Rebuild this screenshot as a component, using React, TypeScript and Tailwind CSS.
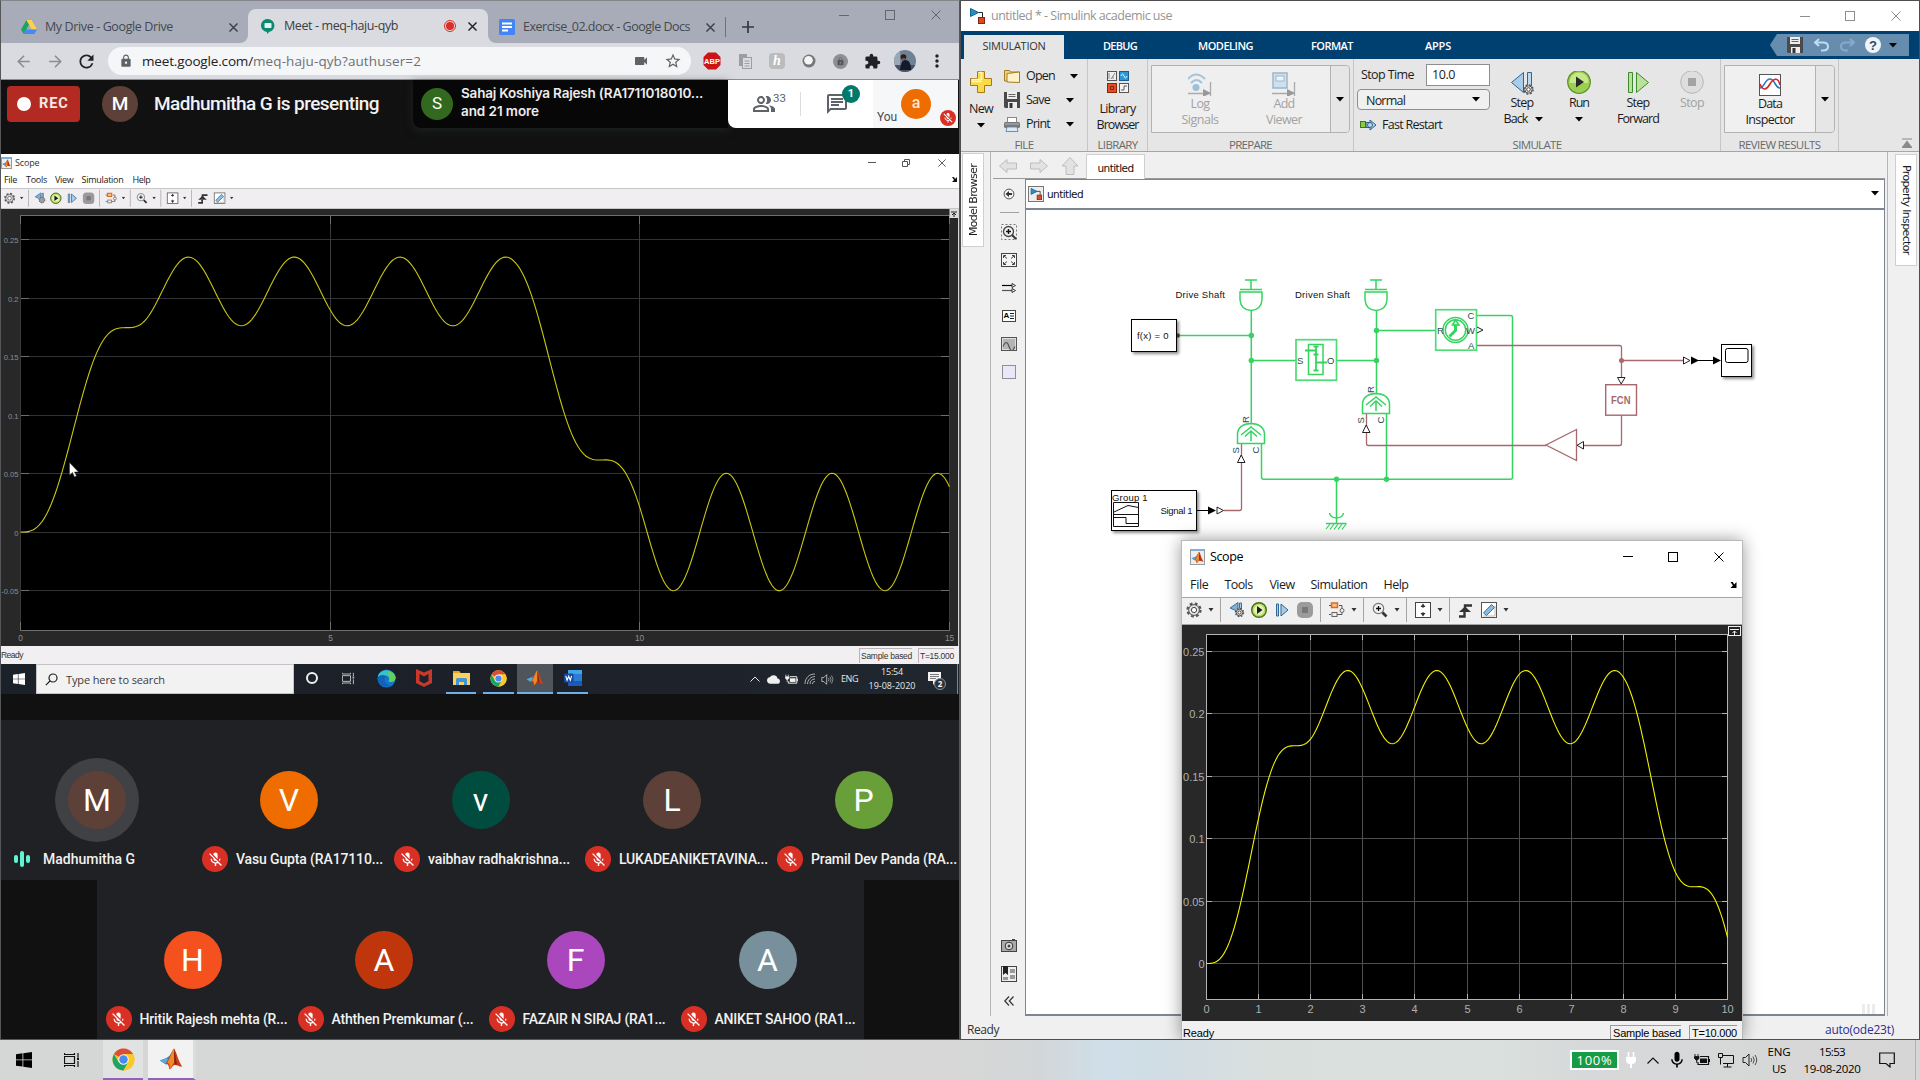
import React, { useLayoutEffect, useRef, useState } from "react";
import {
  MdMicOff, MdOutlinePeopleAlt, MdOutlineChat, MdLock, MdStarBorder, MdVideocam,
  MdExtension, MdMoreVert, MdRefresh, MdArrowBack, MdArrowForward, MdCloud, MdMic,
} from "react-icons/md";

/* ---------- text ---------- */

// A single-line label whose letter spacing is tuned so that it spans `w` pixels.
function T({ w, className = "", children }: { w: number; className?: string; children: string }) {
  const ref = useRef<HTMLSpanElement>(null);
  const [spacing, setSpacing] = useState(0);
  useLayoutEffect(() => {
    const el = ref.current;
    if (el) setSpacing((w - el.getBoundingClientRect().width) / children.length);
  }, [w, children]);
  return (
    <span ref={ref} className={"block w-max shrink-0 whitespace-pre " + className} style={{ letterSpacing: `${spacing}px` }}>
      {children}
    </span>
  );
}

function Caret({ className = "" }: { className?: string }) {
  return (
    <svg width="8" height="5" viewBox="0 0 8 5" className={"shrink-0 " + className}>
      <path d="M0 0h8L4 4.6z" fill="#000" />
    </svg>
  );
}

/* ---------- logos ---------- */

function ChromeLogo({ size }: { size: number }) {
  return (
    <svg width={size} height={size} viewBox="0 0 48 48" className="shrink-0">
      <circle cx="24" cy="24" r="23" fill="#fbc926" />
      <path d="M24 24 4.1 12.5A23 23 0 0 1 43.9 12.5H24z" fill="#dd4b3e" />
      <path d="M4.1 12.5A23 23 0 0 0 24 47l10-17.3L24 24 14 29.7z" fill="#1da362" />
      <path d="M43.9 12.5H24v11.5l10 5.7L24 47A23 23 0 0 0 43.9 12.5z" fill="#fbc926" />
      <circle cx="24" cy="24" r="11" fill="#f3f3f3" />
      <circle cx="24" cy="24" r="8.8" fill="#4a8af4" />
    </svg>
  );
}

function MatlabLogo({ size }: { size: number }) {
  return (
    <svg width={size} height={size} viewBox="0 0 32 32" className="shrink-0">
      <path d="M1 18 10 14.5l4-3 4-6-2 12-6 6-3-2z" fill="#3f7fb5" />
      <path d="m1 18 9-3.5 3 3-5 5z" fill="#5aa9d6" />
      <path d="M20 2c-3 3-5 10-8 15l-3 5c3 0 4 3 5 8 3-1 4-6 7-6 3-1 6 3 10 2-5-6-8-21-11-24z" fill="#c8401c" />
      <path d="M20 2c-3 3-4 9-6 13l-3 6c3 1 4 4 3 8 3-2 4-6 6-8 1-6 2-14 0-19z" fill="#f08a24" />
      <path d="M20 2c2 6 2 13 4 22l-3-1c-1-6-1-15-1-21z" fill="#8c1f10" />
    </svg>
  );
}

function SimulinkLogo() {
  return (
    <svg width="16" height="16" viewBox="0 0 16 16" className="shrink-0">
      <path d="M8.5 4.5h5v5" fill="none" stroke="#222" strokeWidth="1" />
      <path d="M1.5.5v8l8-4z" fill="#2a8cc4" stroke="#15618f" />
      <rect x="9.5" y="9.500" width="6" height="6" fill="#dd4a22" stroke="#8c2409" />
    </svg>
  );
}

function MatlabFrame({ size }: { size: number }) {
  return (
    <span className="flex shrink-0 items-center justify-center border border-[#9a9a9a] border-t-2 border-t-[#7fb0d6] bg-[#eeeeee]">
      <MatlabLogo size={size} />
    </span>
  );
}

/* ---------- plots ---------- */

// Response of an undamped oscillator to a trapezoidal input.
const OMEGA = 3.68;
const SLOPE = 0.1022;
const ramp = (t: number) => (t <= 0 ? 0 : SLOPE * (t - Math.sin(OMEGA * t) / OMEGA));
const angle = (t: number) => ramp(t) - ramp(t - 2.01) - ramp(t - 7.98) + ramp(t - 9.99);

function trace(x0: number, dx: number, y0: number, dy: number, end: number) {
  const pts: string[] = [];
  for (let i = 0; i <= end * 30; i++) {
    const t = i / 30;
    pts.push(`${(x0 + t * dx).toFixed(2)},${(y0 - angle(t) * dy).toFixed(2)}`);
  }
  return pts.join(" ");
}

function SharedPlot() {
  const ys: [string, number][] = [["0.25", 239.5], ["0.2", 298.5], ["0.15", 356.5], ["0.1", 415.5], ["0.05", 473.5], ["0", 532.5], ["-0.05", 590.5]];
  const xs: [string, number][] = [["0", 20.5], ["5", 330.5], ["10", 639.5], ["15", 949.5]];
  return (
    <svg width="957" height="437" viewBox="1 209 957 437" className="block shrink-0">
      <rect x="1" y="209" width="957" height="437" fill="#282828" />
      <rect x="20.5" y="215.5" width="929" height="415" fill="#000" stroke="#6e6e6e" />
      {ys.map(([l, y]) => (
        <g key={l}>
          <path d={`M21 ${y}H949`} stroke="#333333" />
          <path d={`M21 ${y}h8M949 ${y}h-8`} stroke="#6e6e6e" />
          <text x="18.5" y={y + 3} textAnchor="end" fontSize="7.6" fill="#8f8f8f" fontFamily="Liberation Sans, sans-serif">{l}</text>
        </g>
      ))}
      {xs.map(([l, x]) => (
        <g key={l}>
          <path d={`M${x} 216V630`} stroke="#3a3a3a" />
          <path d={`M${x} 216v8M${x} 630v-8`} stroke="#6e6e6e" />
          <text x={x} y="641" textAnchor="middle" fontSize="8.3" fill="#8f8f8f" fontFamily="Liberation Sans, sans-serif">{l}</text>
        </g>
      ))}
      <polyline points={trace(20.5, 61.93, 532, 1171, 15)} fill="none" stroke="#c9c712" strokeWidth="1.1" />
      <path d="M949.5 209h8.500v9h-8.5z" fill="#ddd" />
      <path d="M951 212h6M954 217v-4M952 215l2-2 2 2" stroke="#222" fill="none" />
      <path d="M69.500 462.500v12.500l3-2.500 2 4.500 2-1-2-4h4z" fill="#fff" stroke="#222" strokeWidth=".5" />
    </svg>
  );
}

function LocalPlot() {
  const ys: [string, number][] = [["0.25", 651.5], ["0.2", 713.5], ["0.15", 776.5], ["0.1", 838.5], ["0.05", 901.5], ["0", 963.5]];
  return (
    <svg width="560" height="396" viewBox="1182 625 560 396" className="block shrink-0">
      <rect x="1182" y="625" width="560" height="396" fill="#282828" />
      <rect x="1206.5" y="634.5" width="521" height="365" fill="#000" stroke="#b4b4b4" />
      {ys.map(([l, y]) => (
        <g key={l}>
          <path d={`M1207 ${y}H1727`} stroke="#4e4e4e" />
          <path d={`M1207 ${y}h5M1727 ${y}h-5`} stroke="#b4b4b4" />
          <text x="1204.5" y={y + 4} textAnchor="end" fontSize="11" fill="#afafaf" fontFamily="Liberation Sans, sans-serif">{l}</text>
        </g>
      ))}
      {Array.from({ length: 11 }, (_, i) => {
        const x = Math.round(1206 + i * 52.1) + 0.5;
        return (
          <g key={i}>
            <path d={`M${x} 635V999`} stroke="#4e4e4e" />
            <path d={`M${x} 635v5M${x} 999v-5`} stroke="#b4b4b4" />
            <text x={x} y="1013" textAnchor="middle" fontSize="11" fill="#afafaf" fontFamily="Liberation Sans, sans-serif">{i}</text>
          </g>
        );
      })}
      <path d="M1206.5 634.500H1727.500V999.500H1206.500z" fill="none" stroke="#b4b4b4" />
      <polyline points={trace(1206.5, 52.1, 963.5, 1248, 10)} fill="none" stroke="#f2f200" strokeWidth="1.1" />
      <rect x="1728.500" y="626.500" width="12" height="9" fill="#222" stroke="#eee" />
      <path d="M1730 629.500h9M1734.500 635v-4M1732.500 633l2-2 2 2" stroke="#eee" fill="none" />
    </svg>
  );
}

/* ---------- scope tool bar ---------- */

function Divider() {
  return <span className="h-6 w-px shrink-0 bg-[#a5a5a5]" />;
}

function SmallCaret() {
  return (
    <svg width="6" height="4" viewBox="0 0 6 4" className="mx-1.5 shrink-0"><path d="M.5 0h5L3 3.500z" fill="#333" /></svg>
  );
}

function Gear({ cx = 8, cy = 8, r = 6 }: { cx?: number; cy?: number; r?: number }) {
  return (
    <g>
      <circle cx={cx} cy={cy} r={r} fill="#d9d9d9" stroke="#555" strokeWidth={r * 0.35} strokeDasharray={`${r * 0.42} ${r * 0.366}`} />
      <circle cx={cx} cy={cy} r={r * 0.82} fill="#e4e4e4" stroke="#555" strokeWidth="1" />
      <circle cx={cx} cy={cy} r={r * 0.4} fill="#fff" stroke="#444" strokeWidth="1" />
    </g>
  );
}

function Icon16({ children, className = "" }: { children: React.ReactNode; className?: string }) {
  return <svg width="16" height="16" viewBox="0 0 16 16" className={"shrink-0 overflow-visible " + className}>{children}</svg>;
}

function ScopeTools() {
  return (
    <div className="flex h-[26px] w-[340px] items-center pl-1">
      <Icon16><Gear r={6.5} /></Icon16>
      <SmallCaret />
      <Divider />
      <Icon16 className="ml-2">
        <path d="M9 .5v9L1 6z" fill="#7fb1d8" stroke="#3c6f9a" />
        <path d="M10.500 1h2v6h-2z" fill="#a8cbe6" stroke="#3c6f9a" />
        <Gear cx={10.5} cy={10.5} r={4} />
      </Icon16>
      <Icon16 className="ml-1.5">
        <circle cx="8" cy="8" r="7.300" fill="#b8dd63" stroke="#4c6b1e" strokeWidth="1.400" />
        <circle cx="8" cy="8" r="5" fill="#e4f5b4" />
        <path d="M6 4v8l5.500-4z" fill="#1c1c1c" />
      </Icon16>
      <Icon16 className="ml-[7px]">
        <path d="M2.500 2v12h2V2zM7 2v12l7-6z" fill="#a9cbe8" stroke="#2f6597" />
      </Icon16>
      <Icon16 className="ml-[7px]">
        <rect x="0" y="0" width="16" height="16" rx="5" fill="#9b9b9b" />
        <rect x="5" y="5" width="6" height="6" fill="#787878" />
      </Icon16>
      <span className="w-[7px]" />
      <Divider />
      <Icon16 className="ml-2">
        <path d="M0 3.500h4M10 3.500h3v3M0 12.500h2M8 12.500h5v-2" fill="none" stroke="#555" />
        <rect x="2.500" y="1" width="6" height="4.500" fill="#f7c08a" stroke="#e0691a" strokeWidth="1.500" />
        <rect x="3" y="10.500" width="5" height="4" fill="#eee" stroke="#666" />
        <circle cx="13" cy="8.500" r="2" fill="#eee" stroke="#666" />
      </Icon16>
      <SmallCaret />
      <Divider />
      <Icon16 className="ml-2">
        <circle cx="6.500" cy="6.500" r="5.200" fill="#eef4f8" stroke="#777" strokeWidth="1.200" />
        <path d="M4 6.500h5M6.500 4v5" stroke="#111" strokeWidth="1.300" />
        <path d="m10.500 10.500 4 4" stroke="#333" strokeWidth="2.600" />
      </Icon16>
      <SmallCaret />
      <Divider />
      <Icon16 className="ml-2">
        <rect x=".5" y=".5" width="15" height="15" fill="#fff" stroke="#444" />
        <path d="M8 1.500 5.500 5h5zM8 14.500 5.500 11h5z" fill="#333" />
        <path d="M8 4v2M8 10v2" stroke="#333" />
      </Icon16>
      <SmallCaret />
      <Divider />
      <Icon16 className="ml-[7px]">
        <path d="M2 14.500h5.500V10M8 9V3.500h7" fill="none" stroke="#333" strokeWidth="2.400" />
        <path d="M2 10 8 4.500l6 5.500z" fill="#333" />
      </Icon16>
      <Icon16 className="ml-2">
        <rect x=".5" y=".5" width="15" height="15" fill="#fff" stroke="#555" />
        <path d="M2 14h12M14 14V4" stroke="#bbb" fill="none" />
        <path d="m2.500 11 8-8.500 3 3-8 8z" fill="#8bbbe0" stroke="#38729f" />
      </Icon16>
      <SmallCaret />
    </div>
  );
}

/* ---------- meet window ---------- */

function Cross({ s, w }: { s: number; w: number }) {
  return (
    <svg width={s} height={s} viewBox="0 0 10 10" className="block"><path d="m.5.5 9 9m0-9-9 9" stroke="currentColor" strokeWidth={w} /></svg>
  );
}

function BrowserChrome() {
  return (
    <>
      <div className="flex h-[42px] shrink-0 bg-[#dadbe1]">
        <div className="flex h-[42px] w-[247px] items-center rounded-br-lg bg-[#a8acb9] pl-5 pt-2.5">
          <svg width="16" height="16" viewBox="0 0 16 16">
            <path d="M5.500 1 0 10.500 2.700 15l5.500-9.500z" fill="#1da462" />
            <path d="M5.500 1h5L16 10.500h-5.300z" fill="#ffd04b" />
            <path d="M2.700 15 5.400 10.500H16L13.300 15z" fill="#4688f4" />
          </svg>
          <T w={128} className="ml-2 font-['Open_Sans',sans-serif] text-[12.500px] leading-4 text-[#45484f]">My Drive - Google Drive</T>
          <span className="ml-14 text-[#3c4047]"><Cross s={9} w={1.6} /></span>
        </div>
        <div className="flex w-60 bg-[#a8acb9] pt-2">
          <div className="flex h-[34px] w-60 items-center rounded-t-lg bg-[#dadbe1] pl-[13px]">
            <svg width="14" height="15" viewBox="0 0 14 15">
              <path d="M7 0a6.500 6.500 0 0 1 1.500 12.800L6 15v-2A6.500 6.500 0 0 1 7 0z" fill="#0b8a72" />
              <rect x="3.500" y="4" width="7" height="5" rx=".8" fill="#e5f3f0" />
            </svg>
            <T w={114} className="ml-[9px] font-['Open_Sans',sans-serif] text-[12.500px] leading-4 text-[#3a3d42]">Meet - meq-haju-qyb</T>
            <span className="ml-[46px] flex size-3 items-center justify-center rounded-full border border-[#d93025]"><span className="size-2 rounded-full bg-[#d93025]" /></span>
            <span className="ml-3 text-[#202124]"><Cross s={9} w={1.6} /></span>
          </div>
        </div>
        <div className="flex flex-1 rounded-bl-lg bg-[#a8acb9] pl-[11px]">
          <div className="flex h-[42px] items-center pt-2.5">
            <svg width="16" height="16" viewBox="0 0 16 16"><rect width="16" height="16" rx="1.500" fill="#4285f4" /><path d="M3 4.500h10M3 8h10M3 11.500h6" stroke="#fff" strokeWidth="1.800" /></svg>
            <T w={167} className="ml-2 font-['Open_Sans',sans-serif] text-[12.500px] leading-4 text-[#45484f]">Exercise_02.docx - Google Docs</T>
            <span className="ml-4 text-[#3c4047]"><Cross s={9} w={1.6} /></span>
            <span className="ml-[10px] h-5 w-px bg-[#6c707b]" />
            <svg width="12" height="12" viewBox="0 0 12 12" className="ml-4"><path d="M6 0v12M0 6h12" stroke="#34373c" strokeWidth="1.700" /></svg>
          </div>
          <div className="ml-auto flex h-7 items-center pr-[18px] text-[#62666f]">
            <span className="h-px w-[10px] bg-current" />
            <span className="ml-9 size-[10px] border border-current" />
            <span className="ml-9"><Cross s={10} w={1} /></span>
          </div>
        </div>
      </div>
      <div className="flex h-9 shrink-0 items-center bg-[#dadbe1]">
        <MdArrowBack size={19} className="ml-[13px] text-[#8b8d92]" />
        <MdArrowForward size={19} className="ml-[13px] text-[#8b8d92]" />
        <MdRefresh size={21} className="ml-[11px] text-[#202124]" />
        <div className="ml-[11px] flex h-7 w-[583px] items-center rounded-full bg-[#f5f6f8] pl-[11px] pr-[9px]">
          <MdLock size={14} className="text-[#5f6368]" />
          <T w={111} className="ml-[9px] font-['Open_Sans',sans-serif] text-[13.500px] leading-5 text-[#202124]">meet.google.com/</T>
          <T w={168} className="font-['Open_Sans',sans-serif] text-[13.500px] leading-5 text-[#6d7177]">meq-haju-qyb?authuser=2</T>
          <MdVideocam size={16} className="ml-auto text-[#5f6368]" />
          <MdStarBorder size={18} className="ml-[15px] text-[#5f6368]" />
        </div>
        <svg width="18" height="18" viewBox="0 0 18 18" className="ml-3">
          <path d="M5 .5h8L17.500 5v8L13 17.500H5L.5 13V5z" fill="#cd1414" />
          <text x="9" y="12" textAnchor="middle" fontSize="7.500" fontWeight="700" fill="#fff" fontFamily="Liberation Sans, sans-serif">ABP</text>
        </svg>
        <svg width="14" height="16" viewBox="0 0 14 16" className="ml-[17px]"><path d="M1 1h8v3H4v9H1z" fill="#9b9da2" /><rect x="4.500" y="4.500" width="9" height="11" fill="#dcdde1" stroke="#9b9da2" /><path d="M6.500 8h5M6.500 10.500h5M6.500 13h5" stroke="#9b9da2" /></svg>
        <span className="ml-[17px] flex size-4 items-center justify-center rounded-sm bg-[#bcbcbc] font-['Liberation_Serif',serif] text-[14px] font-bold italic leading-4 text-white">h</span>
        <svg width="14" height="14" viewBox="0 0 14 14" className="ml-[17px]"><circle cx="7" cy="7" r="6.500" fill="#777" /><circle cx="6.500" cy="6.200" r="4.300" fill="#f5f5f5" /></svg>
        <span className="ml-[17px] flex size-[15px] items-center justify-center rounded-full bg-[#8e8f92] text-[#56585c]"><MdLock size={9} /></span>
        <MdExtension size={17} className="ml-[16px] text-[#202124]" />
        <svg width="22" height="22" viewBox="0 0 22 22" className="ml-[13px]">
          <defs><clipPath id="me"><circle cx="11" cy="11" r="11" /></clipPath></defs>
          <g clipPath="url(#me)">
            <rect width="22" height="22" fill="#6f8196" /><rect width="6" height="22" fill="#9aa7b4" /><rect y="15" width="22" height="7" fill="#4a5360" />
            <path d="M6 20c1-7 2-10 5-10 5 0 6 5 6 10z" fill="#141a2a" /><circle cx="9.500" cy="7" r="2.800" fill="#2b1d1a" /><path d="M8 8h3l-1 3z" fill="#8a5b45" />
          </g>
        </svg>
        <MdMoreVert size={20} className="ml-[11px] text-[#202124]" />
      </div>
      <div className="h-px shrink-0 bg-[#8b8d92]" />
    </>
  );
}

function MeetHeader() {
  return (
    <div className="flex h-[74px] shrink-0 items-start bg-[#111111]">
      <div className="ml-1.5 mt-1.5 flex h-9 w-[73px] items-center rounded-sm bg-[#b32a23] pl-2.5">
        <span className="size-3.5 rounded-full bg-white" />
        <T w={29.500} className="ml-2 font-['Roboto',sans-serif] text-[14.500px] font-bold leading-5 text-[#f4e7e6]">REC</T>
      </div>
      <span className="ml-[22px] mt-1.5 flex size-9 items-center justify-center rounded-full bg-[#5d4037] font-['Roboto',sans-serif] text-[19px] font-medium text-white">M</span>
      <T w={225} className="ml-4 mt-2.5 font-['Roboto',sans-serif] text-[19px] font-medium leading-7 text-[#f2f2f2]">Madhumitha G is presenting</T>
      <div className="ml-[34px] flex h-12 w-[315px] rounded-bl-lg bg-[#070707] pl-2 pt-2 shadow-[0_2px_8px_rgba(40,50,46,0.6)]">
        <span className="flex size-8 items-center justify-center rounded-full bg-[#33691e] font-['Roboto',sans-serif] text-[17px] text-white">S</span>
        <div className="-mt-1 ml-2 flex flex-col text-[#ededed]">
          <T w={242} className="font-['Inter',sans-serif] text-[13.500px] font-semibold leading-[18px]">Sahaj Koshiya Rajesh (RA1711018010...</T>
          <T w={78} className="font-['Inter',sans-serif] text-[13.500px] font-semibold leading-[18px]">and 21 more</T>
        </div>
      </div>
      <div className="flex h-12 w-[145px] items-center rounded-bl-lg bg-white text-[#5f6368]">
        <MdOutlinePeopleAlt size={24} className="ml-6" />
        <T w={13} className="-mt-3 ml-[-3px] font-['Roboto',sans-serif] text-[11.500px] leading-4">33</T>
        <span className="ml-[14px] h-6 w-px bg-[#dadce0]" />
        <div className="relative ml-[24px]">
          <MdOutlineChat size={24} />
          <span className="absolute -top-[7px] left-[17px] flex size-[18px] items-center justify-center rounded-full bg-[#00796b] font-['Roboto',sans-serif] text-[11px] font-bold text-white">1</span>
        </div>
      </div>
      <div className="relative flex h-12 w-[85px] bg-[#f6f7f8]">
        <T w={20} className="ml-1 mt-[29px] font-['Roboto',sans-serif] text-xs leading-4 text-[#4a4d52]">You</T>
        <span className="ml-1 mt-[9px] flex size-[30px] items-center justify-center rounded-full bg-[#ef6c00] pb-0.5 font-['Roboto',sans-serif] text-base font-medium text-[#fde7d3]">a</span>
        <span className="absolute bottom-0.5 right-0.5 flex size-4 items-center justify-center rounded-full bg-[#d93025] text-white"><MdMicOff size={12} /></span>
      </div>
    </div>
  );
}

function SharedScope() {
  return (
    <>
      <div className="flex h-[17px] shrink-0 items-center bg-white">
        <MatlabFrame size={9} />
        <T w={24.5} className="ml-[3px] font-['Open_Sans',sans-serif] text-[9px] leading-3 text-[#333]">Scope</T>
        <div className="ml-auto flex items-center pr-[13px] text-[#555]">
          <span className="h-px w-2 bg-current" />
          <svg width="8" height="8" viewBox="0 0 8 8" className="ml-[26px]"><path d="M.5 2.500h5v5h-5zM2.500 2V.5h5v5H6" fill="none" stroke="currentColor" /></svg>
          <span className="ml-[28px]"><Cross s={8} w={1.2} /></span>
        </div>
      </div>
      <div className="flex h-[17px] shrink-0 items-center bg-white pl-[3px] font-['Open_Sans',sans-serif] text-[9px] leading-3 text-[#222]">
        <T w={13}>File</T>
        <T w={21} className="ml-[9px]">Tools</T>
        <T w={18.5} className="ml-2">View</T>
        <T w={42} className="ml-2">Simulation</T>
        <T w={18} className="ml-[9px]">Help</T>
        <svg width="5" height="5" viewBox="0 0 5 5" className="ml-auto mr-[2px]"><path d="M0 0h2l1 2 2-2v5H0l2-2z" fill="#111" /></svg>
      </div>
      <div className="h-[21px] shrink-0 border-y border-[#c8c6c8] bg-[#f0eef0]">
        <div className="origin-top-left scale-[0.712]"><ScopeTools /></div>
      </div>
      <SharedPlot />
      <div className="flex h-[18px] shrink-0 items-center bg-[#f2eff2] font-['Liberation_Sans',sans-serif] text-[8.500px] leading-3 text-[#333]">
        <T w={22}>Ready</T>
        <span className="ml-auto flex h-[15px] items-center border-l border-t border-[#b8b4b8] pl-px"><T w={51}>Sample based</T></span>
        <span className="ml-1.5 flex h-[15px] items-center border-l border-t border-[#b8b4b8] pl-px"><T w={34}>T=15.000</T></span>
        <span className="w-[5px]" />
      </div>
    </>
  );
}

function TaskCell({ children, className = "" }: { children: React.ReactNode; className?: string }) {
  return <span className={"flex h-[30px] shrink-0 items-center justify-center border-b-2 " + className}>{children}</span>;
}

function WinLogo({ size, color }: { size: number; color: string }) {
  return (
    <svg width={size} height={size} viewBox="0 0 16 16"><path d="M0 2.200 6.500 1.300v6.200H0zM7.300 1.200 16 0v7.500H7.300zM0 8.300h6.500v6.300L0 13.700zM7.300 8.300H16V16l-8.700-1.200z" fill={color} /></svg>
  );
}

function TaskView({ size, color }: { size: number; color: string }) {
  return (
    <svg width={size} height={size} viewBox="0 0 16 16"><path d="M.5 1v1.500h10V1M.5 4.500h10v7H.5zM.5 15v-1.500h10V15M14 1v4M14 9v6" fill="none" stroke={color} strokeWidth="1.200" /><rect x="13" y="5.500" width="2" height="2.500" fill={color} /></svg>
  );
}

function Speaker({ size, color }: { size: number; color: string }) {
  return (
    <svg width={size} height={size} viewBox="0 0 16 16"><path d="M1 5.500h2.500L7 2v12l-3.500-3.500H1z" fill="none" stroke={color} /><path d="M9 6q1.500 2 0 4M11 4.500q2.500 3.500 0 7M13 3q3.500 5 0 10" fill="none" stroke={color} opacity=".75" /></svg>
  );
}

function BatteryPlug({ w, color }: { w: number; color: string }) {
  return (
    <svg width={w} height={w} viewBox="0 0 16 16"><path d="M6 4.500h8.500v8H4V10M15.500 7v3" fill="none" stroke={color} strokeWidth="1.200" /><rect x="6" y="6.500" width="7" height="4.500" fill={color} /><path d="M1 2v2M4 2v2M.5 4.500h4.500v2L2.700 8.500.5 6.500zM2.700 8v3" fill={color} stroke={color} strokeWidth=".9" /></svg>
  );
}

function SharedTaskbar() {
  return (
    <div className="flex h-[30px] shrink-0 items-center bg-gradient-to-r from-[#1b2129] via-[#1d2029] to-[#20272e]">
      <span className="flex w-[35px] justify-center"><WinLogo size={12} color="#fff" /></span>
      <div className="flex h-[30px] w-[258px] items-center border border-[#c4c4c4] bg-[#f3f2f3] pl-2">
        <svg width="13" height="13" viewBox="0 0 13 13"><circle cx="8" cy="5" r="4" fill="none" stroke="#222" strokeWidth="1.200" /><path d="M5 8 .8 12.200" stroke="#222" strokeWidth="1.200" /></svg>
        <T w={99} className="ml-2 mt-0.5 font-['Open_Sans',sans-serif] text-[11px] leading-4 text-[#3b3b3b]">Type here to search</T>
      </div>
      <TaskCell className="w-9 border-transparent"><span className="size-3 rounded-full border-2 border-[#f0f0f0]" /></TaskCell>
      <TaskCell className="w-9 border-transparent"><TaskView size={13} color="#b9bcc0" /></TaskCell>
      <TaskCell className="w-10 border-transparent">
        <svg width="19" height="19" viewBox="0 0 20 20"><circle cx="10" cy="10" r="9.500" fill="#1377c9" /><path d="M1 8C3-1 17-1 19.500 8.500c.5 5-4 6-7.500 4.500 2-2 1-5.500-2-6-4-.5-7 2-9 1z" fill="#39c0c8" /><path d="M12 2c5 1 7.500 4 7.500 7 0 4-4 5-7.500 4 2-2 1-5 0-6z" fill="#63d15a" /><path d="M1 9c3-4 7-2.500 8.500-1-3 2-2 8 5 10C6 21-.5 15 1 9z" fill="#1063b8" /></svg>
      </TaskCell>
      <TaskCell className="w-[35px] border-transparent">
        <svg width="16" height="18" viewBox="0 0 16 18"><path d="m0 0 8 3.500L16 0v14l-8 4-8-4zM3.500 5v7L8 14.500l4.500-2.500V5L8 7.500z" fill="#c8392b" fillRule="evenodd" /></svg>
      </TaskCell>
      <TaskCell className="ml-[5px] w-[30px] border-[#6fb1e6]">
        <svg width="17" height="14" viewBox="0 0 17 14"><path d="M0 0h6l1.500 2H17v12H0z" fill="#fbd05c" /><path d="M0 0h6l1.500 2H0z" fill="#e5a41b" /><path d="M3 14V8.500Q3 7 4.500 7h8Q14 7 14 8.500V14h-3v-3H6v3z" fill="#3c97dd" /></svg>
      </TaskCell>
      <TaskCell className="ml-[7px] w-[31px] border-[#6fb1e6]"><ChromeLogo size={17} /></TaskCell>
      <TaskCell className="ml-[3px] w-9 border-[#6fb1e6] bg-[#50545b]"><MatlabLogo size={18} /></TaskCell>
      <TaskCell className="ml-1 w-[31px] border-[#6fb1e6]">
        <svg width="18" height="16" viewBox="0 0 18 16"><rect x="4" width="14" height="16" rx="1" fill="#2b7cd3" /><rect x="4" width="14" height="4" fill="#41a5ee" /><rect x="4" y="11" width="14" height="5" fill="#185abd" /><rect y="3.500" width="9.500" height="9" rx="1" fill="#17489e" /><path d="m1.800 5.800 1.300 4.500 1.600-4 1.600 4 1.300-4.500" fill="none" stroke="#fff" strokeWidth="1.100" /></svg>
      </TaskCell>
      <div className="ml-auto flex items-center text-[#e4e6e8]">
        <svg width="10" height="6" viewBox="0 0 10 6"><path d="M.5 5.500 5 1l4.500 4.500" fill="none" stroke="currentColor" /></svg>
        <MdCloud size={13} className="ml-[7px] text-[#efefef]" />
        <span className="ml-[5px]"><BatteryPlug w={13} color="#f0f0f0" /></span>
        <svg width="12" height="12" viewBox="0 0 12 12" className="ml-1.5"><path d="M1 11C1 5 5 1 11 1M3.500 11C3.500 7 7 3.500 11 3.500M6 11c0-3 2-5 5-5M8.500 11c0-1.500 1-2.500 2.500-2.500" fill="none" stroke="#a9adb2" /></svg>
        <span className="ml-[5px]"><Speaker size={13} color="#c9ccd0" /></span>
        <T w={17} className="ml-[7px] font-['Open_Sans',sans-serif] text-[9px] leading-3">ENG</T>
        <div className="ml-2.5 flex w-[48px] flex-col items-center font-['Open_Sans',sans-serif] text-[9px] leading-[14px]">
          <T w={22}>15:54</T>
          <T w={47}>19-08-2020</T>
        </div>
        <div className="relative ml-[12px] mr-[15px]">
          <svg width="14" height="14" viewBox="0 0 14 14"><path d="M0 0h13v9H8l-3 4V9H0z" fill="#f2f2f2" /><path d="M2 2.500h9M2 4.500h9M2 6.500h6" stroke="#444" strokeWidth=".7" /></svg>
          <span className="absolute -bottom-1 left-[6px] flex size-[12px] items-center justify-center rounded-full border border-[#8c9198] bg-[#2b3138] font-['Open_Sans',sans-serif] text-[8px] font-bold leading-none text-white">2</span>
        </div>
        <span className="mr-px h-[30px] w-px bg-[#7d838a]" />
      </div>
    </div>
  );
}

const AVATAR = "flex size-[58px] shrink-0 items-center justify-center rounded-full font-['Roboto',sans-serif] text-[32px] leading-none text-white ";

function Person({ letter, color, name, w, live = false, first = "w-48" }: { letter: string; color: string; name: string; w: number; live?: boolean; first?: string }) {
  return (
    <div className={"flex h-40 shrink-0 flex-col items-center bg-[#202124] pt-[38px] " + first}>
      <div className={"flex size-[84px] items-center justify-center rounded-full " + (live ? "bg-[#404144]" : "")}>
        <span className={AVATAR + color}>{letter}</span>
      </div>
      <div className="mt-1 flex h-[26px] w-full items-center pl-[9px]">
        {live ? (
          <span className="ml-1 flex w-[21px] items-center gap-0.5"><i className="h-2 w-1 rounded-full bg-[#5ef5d4]" /><i className="h-4 w-1 rounded-full bg-[#5ef5d4]" /><i className="h-2 w-1 rounded-full bg-[#5ef5d4]" /></span>
        ) : (
          <span className="flex size-[26px] shrink-0 items-center justify-center rounded-full bg-[#d93025] text-white"><MdMicOff size={17} /></span>
        )}
        <T w={w} className="ml-2 font-['Roboto',sans-serif] text-sm font-medium leading-5 text-[#f1f1f1]">{name}</T>
      </div>
    </div>
  );
}

function MeetWindow() {
  return (
    <section className="flex h-[1040px] w-[960px] shrink-0 flex-col overflow-hidden border border-[#55555a] border-t-[#85868c]">
      <BrowserChrome />
      <MeetHeader />
      <SharedScope />
      <SharedTaskbar />
      <div className="h-[26px] shrink-0 bg-[#111111]" />
      <div className="flex shrink-0 bg-[#202124]">
        <Person first="w-48" letter="M" color="bg-[#5d4037]" name="Madhumitha G" w={92} live />
        <Person letter="V" color="bg-[#ef6c00]" name="Vasu Gupta (RA17110..." w={147} />
        <Person first="w-[191px]" letter="v" color="bg-[#004d40]" name="vaibhav radhakrishna..." w={142} />
        <Person letter="L" color="bg-[#5d4037]" name="LUKADEANIKETAVINA..." w={149} />
        <Person first="w-[191px]" letter="P" color="bg-[#689f38]" name="Pramil Dev Panda (RA..." w={146} />
      </div>
      <div className="flex flex-1 justify-center bg-[#111111]">
        <Person letter="H" color="bg-[#f4511e]" name="Hritik Rajesh mehta (R..." w={148} />
        <Person first="w-[191px]" letter="A" color="bg-[#bf360c]" name="Aththen Premkumar (..." w={142} />
        <Person letter="F" color="bg-[#ab47bc]" name="FAZAIR N SIRAJ (RA1..." w={143} />
        <Person letter="A" color="bg-[#78909c]" name="ANIKET SAHOO (RA1..." w={141} />
      </div>
    </section>
  );
}

/* ---------- simulink window ---------- */

const SEGOE = "font-['Open_Sans',sans-serif] text-[12.500px] leading-4 text-[#1c1c1c]";

function SaveIcon() {
  return (
    <svg width="16" height="16" viewBox="0 0 16 16"><path d="M0 0h16v16H1l-1-1z" fill="#4a4a4a" /><rect x="3" y="0" width="10" height="7" fill="#eee" /><path d="M4.500 2.500h7M4.500 4.500h7" stroke="#666" /><rect x="4" y="10" width="9" height="6" fill="#eee" /><rect x="5.500" y="11" width="3" height="5" fill="#333" /></svg>
  );
}

function Section({ label, lw, className = "", children }: { label: string; lw: number; className?: string; children: React.ReactNode }) {
  return (
    <div className={"flex h-[92px] shrink-0 flex-col " + className}>
      <div className="flex h-[78px]">{children}</div>
      <div className="flex h-3.5 justify-center"><T w={lw} className="font-['Open_Sans',sans-serif] text-[11.500px] leading-4 text-[#6a6a6a]">{label}</T></div>
    </div>
  );
}

function BigButton({ icon, lines, className = "", tone = "text-[#1c1c1c]" }: { icon: React.ReactNode; lines: React.ReactNode[]; className?: string; tone?: string }) {
  return (
    <div className={"flex shrink-0 flex-col items-center " + className}>
      <div className="flex h-6 items-center">{icon}</div>
      <div className={"flex flex-col items-center font-['Open_Sans',sans-serif] text-[12.500px] leading-4 " + tone}>
        {lines.map((l, i) => <div key={i} className="flex h-4 items-center">{l}</div>)}
      </div>
    </div>
  );
}

function FileRow({ icon, name, w, gap }: { icon: React.ReactNode; name: string; w: number; gap: string }) {
  return (
    <div className="flex h-6 items-center">
      {icon}
      <T w={w} className={SEGOE + " ml-1.5"}>{name}</T>
      <Caret className={gap} />
    </div>
  );
}

function Ribbon() {
  return (
    <div className="flex h-[93px] shrink-0 border-b border-[#a6a6a6] bg-[#e6e6e6]">
      <Section label="FILE" lw={19} className="w-[127px] border-r border-[#c6c6c6]">
        <div className="ml-[5px] flex w-[30px] flex-col items-center pt-[11px]">
          <svg width="24" height="24" viewBox="0 0 24 24"><path d="M8.500 1.500h7v7h7v7h-7v7h-7v-7h-7v-7h7z" fill="#fadb45" stroke="#a8791a" /><path d="M9.500 2.500h3v7h-9v2h9" fill="none" stroke="#fff7c8" strokeWidth="1.500" /></svg>
          <T w={24} className={SEGOE + " mt-[7px]"}>New</T>
          <Caret className="mt-1.5" />
        </div>
        <div className="ml-[8px] flex flex-col pt-[5px]">
          <FileRow name="Open" w={29} gap="ml-[15px]" icon={<svg width="16" height="14" viewBox="0 0 16 14"><path d="M.5 12V1.500h5l1 1.500h9v10.500z" fill="#f2d37c" stroke="#a67c28" /><path d="M3 4.500 15.500 3v10.500L3 13z" fill="#fdf3c8" stroke="#a67c28" /></svg>} />
          <FileRow name="Save" w={24} gap="ml-4" icon={<SaveIcon />} />
          <FileRow name="Print" w={24} gap="ml-4" icon={<svg width="16" height="15" viewBox="0 0 16 15"><rect x="3.500" y=".5" width="9" height="5" fill="#fff" stroke="#888" /><rect y="5" width="16" height="6" rx="1.500" fill="#777" /><path d="M1 7h14" stroke="#bbb" /><path d="M3 10h10l1 4.500H2z" fill="#dceaf5" stroke="#6f8da8" /></svg>} />
        </div>
      </Section>
      <Section label="LIBRARY" lw={40} className="w-[60px] border-r border-[#c6c6c6]">
        <div className="flex w-full flex-col items-center pt-3">
          <svg width="22" height="22" viewBox="0 0 22 22">
            <rect x=".5" y=".5" width="9" height="9" fill="#eee" stroke="#555" /><path d="M2 8V2M4 8l4-6M6 8V5" stroke="#888" />
            <rect x="12.500" y=".5" width="9" height="9" fill="#2c96d8" stroke="#1b5f8e" /><path d="M14 5q1.500-4 3 0t3 0" fill="none" stroke="#dff" />
            <rect x=".5" y="12.500" width="9" height="9" fill="#e04e26" stroke="#8c2409" /><rect x="3.500" y="15.500" width="3" height="3" fill="none" stroke="#8c2409" />
            <rect x="12.500" y="12.500" width="9" height="9" fill="#f5f5f5" stroke="#555" /><path d="M14 19h3v-4h3" fill="none" stroke="#555" />
          </svg>
          <T w={36} className={SEGOE + " mt-2"}>Library</T>
          <T w={42} className={SEGOE}>Browser</T>
        </div>
      </Section>
      <Section label="PREPARE" lw={43} className="w-[206px] border-r border-[#c6c6c6]">
        <div className="ml-[3px] mt-1.5 flex h-[68px] w-[199px] rounded-r border border-[#b2b2b2] bg-[#efefef]">
          <BigButton className="ml-[18px] w-[60px] pt-[6px]" tone="text-[#a2a2a2]" icon={
            <svg width="24" height="24" viewBox="0 0 24 24"><path d="M0 21.500h22M22.500 10v14" stroke="#aaa" strokeWidth="1.300" /><path d="M15 17v8l8-4z" fill="#999" /><circle cx="8" cy="15.500" r="3.500" fill="#9cc0d8" /><path d="M0 7q8-9 17 0M3 11q5.500-6 11 0" fill="none" stroke="#a3c4da" strokeWidth="2" /></svg>}
            lines={[<T key="a" w={19}>Log</T>, <T key="b" w={37}>Signals</T>]} />
          <BigButton className="ml-[24px] w-[60px] pt-[6px]" tone="text-[#a2a2a2]" icon={
            <svg width="24" height="24" viewBox="0 0 24 24"><path d="M0 21.500h22M22.500 10v14" stroke="#aaa" strokeWidth="1.300" /><path d="M15 17v8l8-4z" fill="#999" /><rect x="1" y="1" width="14" height="15" fill="#cfe0ec" stroke="#9ab8cc" strokeWidth="1.500" /><rect x="4" y="4" width="8" height="5" fill="#eef5f9" stroke="#9ab8cc" /></svg>}
            lines={[<T key="a" w={21}>Add</T>, <T key="b" w={36}>Viewer</T>]} />
          <span className="ml-auto flex w-[19px] items-center justify-center rounded-r border-l border-[#b2b2b2] bg-[#e6e6e6]"><Caret /></span>
        </div>
      </Section>
      <Section label="SIMULATE" lw={49} className="w-[367px] border-r border-[#c6c6c6]">
        <div className="ml-[3px] flex w-[133px] flex-col pt-[5px]">
          <div className="flex h-[22px] items-center justify-between">
            <T w={53} className={SEGOE + " ml-1"}>Stop Time</T>
            <span className="flex h-[22px] w-16 items-center border border-[#8e8e8e] bg-white pl-[5px]"><T w={23} className={SEGOE}>10.0</T></span>
          </div>
          <div className="mt-[3px] flex h-[22px] items-center justify-between rounded border border-[#8e8e8e] bg-[#f0f0f0] pl-2 pr-[9px]"><T w={39} className={SEGOE + " mt-0.5"}>Normal</T><Caret /></div>
          <div className="flex h-[28px] items-center pl-[3px] pt-[3px]">
            <svg width="17" height="12" viewBox="0 0 17 12"><rect x=".5" y="2.500" width="5" height="6" fill="#8ccb3f" stroke="#3f7a17" /><path d="M6 3.500h4V1l6 5-6 5V8.500H6z" fill="#bcd6ea" stroke="#2d5f88" /><circle cx="10" cy="6" r="2.500" fill="none" stroke="#2d5f88" /></svg>
            <T w={60} className={SEGOE + " ml-[5px]"}>Fast Restart</T>
          </div>
        </div>
        <BigButton className="ml-2 w-12 pt-3" icon={
          <svg width="24" height="24" viewBox="0 0 24 24"><path d="M13.500 1.500v20L1.500 11.500z" fill="#a9cde8" stroke="#2f6597" /><path d="M17.500 1.500h4v15h-4z" fill="#bcd9ee" stroke="#2f6597" /><Gear cx={18.5} cy={18.500} r={4.5} /></svg>}
          lines={[<T key="s" w={23}>Step</T>, <span key="b" className="flex items-center pl-0.5"><T w={24}>Back</T><Caret className="ml-[7px]" /></span>]} />
        <BigButton className="ml-[9px] w-12 pt-3" icon={
          <svg width="24" height="24" viewBox="0 0 24 24"><circle cx="12" cy="11" r="11.300" fill="#9bce4a" stroke="#5f8f2e" strokeWidth="1.200" /><circle cx="12" cy="11" r="9.500" fill="#c6e88a" /><path d="M2.500 12a9.500 9.500 0 0 0 19 0z" fill="#9ad04e" /><path d="M9 5.500v11l8-5.500z" fill="#2a2a2a" /></svg>}
          lines={[<T key="r" w={20}>Run</T>, <Caret key="c" />]} />
        <BigButton className="ml-[11px] w-12 pt-3" icon={
          <svg width="24" height="24" viewBox="0 0 24 24"><path d="M2.500 1.500h4v20h-4zM10.500 1.500v20l12-10z" fill="#b9e29b" stroke="#3f8a2c" /></svg>}
          lines={[<T key="s" w={23}>Step</T>, <T key="f" w={42}>Forward</T>]} />
        <BigButton className="ml-[6px] w-12 pt-3" tone="text-[#a2a2a2]" icon={
          <svg width="24" height="24" viewBox="0 0 24 24"><circle cx="12" cy="11" r="11.300" fill="#dedede" stroke="#b5b5b5" /><rect x="8" y="7" width="8" height="8" fill="#a3a3a3" /></svg>}
          lines={[<T key="s" w={24}>Stop</T>]} />
      </Section>
      <Section label="REVIEW RESULTS" lw={82} className="w-[118px] border-r border-[#c6c6c6]">
        <div className="ml-[3px] mt-1.5 flex h-[68px] w-[111px] rounded-r border border-[#b2b2b2] bg-[#f0f0f0]">
          <BigButton className="ml-[15px] w-[60px] pt-[6px]" icon={
            <svg width="22" height="22" viewBox="0 0 22 22" className="mt-0.5"><rect x=".5" y=".5" width="21" height="21" fill="#fff" stroke="#555" /><path d="M1 14C5 14 6 5 11 5s5 9 10 9" fill="none" stroke="#2a77c4" strokeWidth="1.600" /><path d="M1 10c3 8 7 5 10 0s8-8 10 1" fill="none" stroke="#d4252a" strokeWidth="1.600" /></svg>}
            lines={[<T key="a" w={24}>Data</T>, <T key="b" w={49}>Inspector</T>]} />
          <span className="ml-auto flex w-[19px] items-center justify-center rounded-r border-l border-[#b2b2b2] bg-[#e6e6e6]"><Caret /></span>
        </div>
      </Section>
      <svg width="10" height="10" viewBox="0 0 10 10" className="mb-[3px] ml-auto mr-[7px] self-end"><path d="M0 1h10M0 10l5-6.500L10 10z" fill="#8a8a8a" stroke="#8a8a8a" strokeWidth="1.200" /></svg>
    </div>
  );
}

const BROWN = "#a8676b";
const GREEN = "#35d45f";
const NAVY = "#2f4a55";

function Shaft({ x }: { x: number }) {
  return (
    <g fill="none" stroke={GREEN} strokeWidth="1.500">
      <path d={`M${x - 6} 280h12M${x} 280v9M${x - 11} 289.500h22`} />
      <path d={`M${x - 11} 292h22v8q-1 10-11 10.500q-10-.5-11-10.500z`} />
    </g>
  );
}

function Torque({ x, y }: { x: number; y: number }) {
  return (
    <g>
      <path d={`M${x - 13.5} ${y + 20}v-10q1-9.500 13.500-10q12.500.5 13.500 10v10z`} fill="#fff" stroke={GREEN} strokeWidth="1.500" />
      <path d={`M${x - 10} ${y + 11.5}l10-8 10 8M${x - 6} ${y + 13}l6-5.500 6 5.500M${x} ${y + 8}v9.500`} fill="none" stroke={GREEN} strokeWidth="1.500" />
      <g fontSize="9.500" fill={NAVY} fontFamily="Liberation Sans, sans-serif">
        <text transform={`translate(${x - 2.5} ${y - 0.5}) rotate(-90)`}>R</text>
        <text transform={`translate(${x - 12} ${y + 30}) rotate(-90)`}>S</text>
        <text transform={`translate(${x + 8} ${y + 30}) rotate(-90)`}>C</text>
      </g>
    </g>
  );
}

function Diagram() {
  return (
    <svg width="857" height="805" viewBox="1026 210 857 805" className="block shrink-0" fontFamily="Liberation Sans, sans-serif">
      <defs>
        <filter id="drop" x="-20%" y="-20%" width="150%" height="150%"><feDropShadow dx="2" dy="2" stdDeviation="1.500" floodOpacity=".45" /></filter>
      </defs>
      <g fill="none" stroke={GREEN} strokeWidth="1.500" strokeLinejoin="round">
        <path d="M1251.300 311V423M1179 335.500H1251M1251 360.500H1296M1336.500 360.500H1376.500M1376.500 311V393M1376.500 330.500H1435.500" />
        <path d="M1476.500 315.500H1510.500q2 0 2 2V477.300q0 2-2 2H1263.500q-2 0-2-2V443.500M1386.500 413.500V479.300M1336.500 479.300V523" />
        <path d="M1326 523.500h20.500M1329.500 513q.5 4.500 7 5 6.500-.5 7-5" />
        <path d="m1326 529 4-5m0 5.500 4-5.500m0 5.500 4-5.500m0 5.500 4-5.500m0 5.500 4-5.500" strokeWidth="1.200" />
      </g>
      <g fill="none" stroke={BROWN} strokeWidth="1.300" strokeLinejoin="round">
        <path d="M1476.500 345.500H1619.500q2 0 2 2V377M1621.500 360.500H1683M1621.500 415V443.500q0 2-2 2H1584M1546 445.500H1368.500q-2 0-2-2V413.500M1241.500 443.500V508.500q0 2-2 2H1224" />
      </g>
      <g fill={GREEN}>
        <circle cx="1251.300" cy="335.500" r="2.700" /><circle cx="1251.300" cy="360.500" r="2.700" /><circle cx="1376.500" cy="330.500" r="2.700" /><circle cx="1376.500" cy="360.500" r="2.700" /><circle cx="1336.500" cy="479.300" r="2.700" /><circle cx="1386.500" cy="479.300" r="2.700" />
      </g>
      <circle cx="1621.500" cy="360.500" r="2.500" fill={BROWN} />
      <Shaft x={1251} />
      <Shaft x={1376} />
      <Torque x={1251} y={423.5} />
      <Torque x={1376} y={393.5} />
      <g fontSize="9.500" fill="#111">
        <text x="1175.500" y="298" textLength="49.500" lengthAdjust="spacing">Drive Shaft</text>
        <text x="1295" y="298" textLength="55" lengthAdjust="spacing">Driven Shaft</text>
      </g>
      <rect x="1131.500" y="319.500" width="45" height="32" fill="#fff" stroke="#000" filter="url(#drop)" />
      <text x="1137" y="339" fontSize="9.500" textLength="31.500" fill="#111">f(x) = 0</text>
      <rect x="1177" y="333.500" width="2.500" height="4" fill="#333" />
      <rect x="1296" y="339.700" width="40.500" height="40.500" fill="#fff" stroke="#4fdc77" strokeWidth="1.700" />
      <g fill="none" stroke={GREEN} strokeWidth="1.500">
        <rect x="1308.500" y="344.500" width="14.500" height="30" />
        <path d="M1305 350.500h11M1316 346v8M1316 354v17M1313.500 346.500h5M1313.500 354.500h5M1313.500 370.500h5M1316 362.500h11" strokeWidth="1.800" />
      </g>
      <g fontSize="9.500" fill={NAVY}><text x="1297" y="364">S</text><text x="1327" y="364">O</text></g>
      <rect x="1435.700" y="309.700" width="40.800" height="40.500" fill="#fff" stroke="#4fdc77" strokeWidth="1.700" />
      <g fill="none" stroke={GREEN} strokeWidth="1.500">
        <circle cx="1455.500" cy="330" r="12.500" /><circle cx="1455.500" cy="330" r="10.200" />
        <path d="m1449.500 336.500 6-6v-6" strokeWidth="3" /><path d="m1452.500 325 3-5 3.500 5z" />
      </g>
      <g fontSize="9.500" fill={NAVY}><text x="1437" y="334">R</text><text x="1467.500" y="319">C</text><text x="1466" y="334">W</text><text x="1468" y="349">A</text></g>
      <g fill="#fff" stroke="#222" strokeWidth="1">
        <path d="M1477 327l6 3-6 3M1237.500 462.500h7.500l-3.800-7.500zM1362.500 432.500h7.500l-3.800-7.500zM1617.500 377.500h7.500l-3.800 6.500zM1583.500 441.500v7.500l-6.500-3.700zM1683.500 357v7l6.500-3.500zM1217 507v7l6.500-3.500z" />
      </g>
      <rect x="1605.700" y="384.700" width="30.800" height="30.500" fill="#fff" stroke={BROWN} strokeWidth="1.400" />
      <text x="1611" y="403.700" fontSize="10" fill={BROWN} fontWeight="700" textLength="19.500" lengthAdjust="spacingAndGlyphs">FCN</text>
      <path d="M1576.500 429.500v31L1546 445z" fill="#fff" stroke={BROWN} strokeWidth="1.300" />
      <path d="M1691 356.500v8l8-4zM1713 356.500v8l8-4zM1208 506.500v8l8-4z" />
      <path d="M1698 360.500H1714M1197 510.500H1209" stroke="#000" />
      <rect x="1721.500" y="344.500" width="30" height="32" fill="#fff" stroke="#000" filter="url(#drop)" />
      <rect x="1725.500" y="348.500" width="22.500" height="14" rx="2" fill="#fff" stroke="#000" />
      <rect x="1111.500" y="490.500" width="85" height="40" fill="#fff" stroke="#000" filter="url(#drop)" />
      <text x="1112" y="500.500" fontSize="9.500" fill="#111" textLength="35.500">Group 1</text>
      <text x="1160.500" y="513.500" fontSize="9.500" fill="#111" textLength="32">Signal 1</text>
      <path d="M1113.500 502.500h25v24h-25zM1113.500 514.500h25M1114 512l14-6.500 10.500 2M1114 517.500h12v6h12.500" fill="none" stroke="#111" />
      <path d="M1863.500 1004v10M1868.500 1004v10M1873.500 1004v10" stroke="#ececec" strokeWidth="3" />
    </svg>
  );
}

function ScopeWindow() {
  return (
    <div className="absolute left-[220px] top-[539px] flex h-[500px] w-[562px] flex-col border border-[#b9b9b9] bg-[#f0f0f0] shadow-[0_0_16px_rgba(0,0,0,0.4)]">
      <div className="flex h-[31px] shrink-0 items-center bg-white pl-2">
        <MatlabFrame size={13} />
        <T w={33} className={SEGOE + " ml-[5px] text-black"}>Scope</T>
        <div className="ml-auto flex items-center pr-[18px] text-black">
          <span className="h-px w-[10px] bg-current" />
          <span className="ml-[35px] size-[10px] border border-current" />
          <span className="ml-[36px]"><Cross s={10} w={1} /></span>
        </div>
      </div>
      <div className={"flex h-[25px] shrink-0 items-center bg-white pl-2 " + SEGOE}>
        <T w={18.5}>File</T>
        <T w={28} className="ml-4">Tools</T>
        <T w={25} className="ml-[17px]">View</T>
        <T w={57} className="ml-[16px]">Simulation</T>
        <T w={25} className="ml-[16px]">Help</T>
        <svg width="7" height="6" viewBox="0 0 5 5" className="ml-auto mr-[5px]"><path d="M0 0h2l1 2 2-2v5H0l2-2z" fill="#000" /></svg>
      </div>
      <div className="h-7 shrink-0 border-y border-[#a5a5a5]"><div className="-mt-px"><ScopeTools /></div></div>
      <LocalPlot />
      <div className="flex h-[19px] shrink-0 items-end bg-[#f0f0f0] pb-px font-['Liberation_Sans',sans-serif] text-[11px] leading-[11px] text-black">
        <T w={31} className="ml-px">Ready</T>
        <span className="ml-auto flex h-[14px] items-end border-l border-t border-[#9a9a9a] pl-0.5"><T w={68}>Sample based</T></span>
        <span className="ml-2 flex h-[14px] items-end border-l border-t border-[#9a9a9a] pl-0.5"><T w={45}>T=10.000</T></span>
        <span className="w-[5px]" />
      </div>
    </div>
  );
}

function Palette() {
  return (
    <div className="flex w-8 shrink-0 flex-col items-center pt-[7px]">
      <svg width="12" height="12" viewBox="0 0 12 12" className="my-0.5"><circle cx="6" cy="6" r="4.900" fill="#f4f4f4" stroke="#555" /><path d="m2.500 6 3.500-3v2h3v2H6v2z" fill="#333" /></svg>
      <span className="mt-2.5 h-px w-[19px] bg-[#a0a0a0]" />
      <svg width="17" height="16" viewBox="0 0 17 16" className="mt-[11px]"><rect x=".5" y=".5" width="15" height="15" fill="none" stroke="#777" strokeDasharray="2 2" /><circle cx="7.500" cy="7.500" r="5" fill="#eee" stroke="#444" strokeWidth="1.300" /><path d="M5 7.500h5M7.500 5v5" stroke="#111" strokeWidth="1.400" /><path d="m11 11 4 4" stroke="#333" strokeWidth="2" /></svg>
      <svg width="16" height="14" viewBox="0 0 16 14" className="mt-[13px]"><rect x=".5" y=".5" width="15" height="13" fill="#f5f5f5" stroke="#444" /><path d="M2.500 5V2.500H5m6 0h2.500V5m0 4v2.500H11m-6 0H2.500V9M3 3l3 2.500M13 3l-3 2.500M3 11l3-2.500M13 11l-3-2.500" fill="none" stroke="#444" /></svg>
      <svg width="14" height="10" viewBox="0 0 14 10" className="mt-[16px]"><path d="M0 2.500h10" stroke="#000" strokeWidth="1.200" /><path d="M0 7.500h10" stroke="#555" strokeWidth="1.200" /><path d="M10 .5v4l3.500-2zM10 5.500v4l3.500-2z" fill="#fff" stroke="#333" /></svg>
      <span className="mt-[17px] flex h-3 w-3.5 items-center justify-center gap-px border border-[#444] bg-white font-['Liberation_Sans',sans-serif] text-[8px] font-bold leading-none text-black">A<svg width="4" height="6" viewBox="0 0 4 6"><path d="M0 .5h4M0 3h4M0 5.500h4" stroke="#222" /></svg></span>
      <svg width="16" height="14" viewBox="0 0 16 14" className="mt-[15px]"><rect x=".5" y=".5" width="15" height="13" fill="#ddd" stroke="#555" /><rect x="2" y="2" width="12" height="10" fill="#b5b5b5" /><path d="M2 9.500q3.500-8 6 0t6 0" fill="none" stroke="#555" strokeWidth="1.200" /></svg>
      <span className="mt-[14px] size-3.5 border border-[#8f8f98] bg-[#e8e8f8]" />
      <svg width="16" height="13" viewBox="0 0 16 13" className="mt-auto"><rect x=".5" y="1.500" width="15" height="11" fill="#aaa" stroke="#444" /><circle cx="8" cy="7" r="3.800" fill="#ddd" stroke="#333" /><circle cx="8" cy="7" r="1.500" fill="#444" /><rect x="11" y="0" width="3" height="2" fill="#444" /></svg>
      <svg width="16" height="16" viewBox="0 0 16 16" className="mt-[14px]"><rect x=".5" y=".5" width="15" height="15" fill="#eee" stroke="#444" /><path d="M2 0h5v9L4.500 7 2 9z" fill="#222" /><path d="M9 3h5v4H9zM9 9h5v4H9zM2 11h5v3H2z" fill="#999" /></svg>
      <svg width="10" height="10" viewBox="0 0 10 10" className="mb-[10px] mt-[14px]"><path d="M5 .5.800 5 5 9.500M9.500.5 5.300 5l4.200 4.500" fill="none" stroke="#333" strokeWidth="1.200" /></svg>
    </div>
  );
}

function NavArrow({ d, className = "" }: { d: string; className?: string }) {
  return <svg width="18" height="18" viewBox="0 0 18 18" className={"shrink-0 " + className}><path d={d} fill="#e2e2e2" stroke="#bdbdbd" /></svg>;
}

const TAB = "font-['Open_Sans',sans-serif] text-[11px] leading-[14px] ";

function SimulinkWindow() {
  return (
    <section className="relative flex h-[1040px] w-[960px] shrink-0 flex-col overflow-hidden border border-[#4e4e50] bg-[#f0f0f0]">
      <div className="flex h-[30px] shrink-0 items-center bg-white pl-2">
        <SimulinkLogo />
        <T w={181} className="ml-[6px] font-['Open_Sans',sans-serif] text-[12.500px] leading-4 text-[#959595]">untitled * - Simulink academic use</T>
        <div className="ml-auto flex items-center pr-[18px] text-[#8e8e8e]">
          <span className="h-px w-[10px] bg-current" />
          <span className="ml-[35px] size-[10px] border border-current" />
          <span className="ml-9"><Cross s={10} w={1} /></span>
        </div>
      </div>
      <div className="flex h-7 shrink-0 items-center bg-[#004071] text-white">
        <div className="ml-[3px] mt-1 flex h-6 w-[100px] items-center justify-center bg-[#e6e6e6] pb-0.5 text-[#333]"><T w={63} className={TAB}>SIMULATION</T></div>
        <T w={34} className={TAB + "ml-[39px] mt-0.5 font-semibold"}>DEBUG</T>
        <T w={55} className={TAB + "ml-[61px] mt-0.5 font-semibold"}>MODELING</T>
        <T w={42} className={TAB + "ml-[58px] mt-0.5 font-semibold"}>FORMAT</T>
        <T w={26} className={TAB + "ml-[72px] mt-0.5 font-semibold"}>APPS</T>
        <div className="ml-auto mr-[10px] flex h-[22px] w-[139px] items-center bg-[#678dae] pl-[17px] [clip-path:polygon(0_50%,7px_0,100%_0,100%_100%,7px_100%)]">
          <SaveIcon />
          <svg width="16" height="14" viewBox="0 0 16 14" className="ml-[11px]"><path d="M5 1 1 4.500 5 8M1.500 4.500H9q5 0 5 4t-5 4H7" fill="none" stroke="#bcdcf2" strokeWidth="2" /></svg>
          <svg width="16" height="14" viewBox="0 0 16 14" className="ml-[9px]"><path d="m11 1 4 3.500L11 8M14.500 4.500H7q-5 0-5 4t5 4h2" fill="none" stroke="#86abc9" strokeWidth="2" /></svg>
          <span className="ml-[10px] flex size-4 items-center justify-center rounded-full bg-[#f0f4f8] font-['Liberation_Sans',sans-serif] text-[13px] font-bold leading-none text-[#2a4a66]">?</span>
          <Caret className="ml-[8px]" />
        </div>
      </div>
      <Ribbon />
      <div className="flex h-[864px] shrink-0">
        <div className="w-[30px] shrink-0 border-r border-[#b5b5b5] pl-px pt-px">
          <div className="flex h-[94px] w-[22px] items-center justify-center border border-[#cfcfcf] bg-white">
            <span className="rotate-180 font-['DejaVu_Sans',sans-serif] text-[11px] leading-none tracking-[-0.700px] text-[#1c1c1c] [writing-mode:vertical-rl]">Model Browser</span>
          </div>
        </div>
        <div className="ml-0.5 flex w-[892px] shrink-0 flex-col">
          <div className="flex h-[27px] items-center border-b border-[#9a9a9a] pl-1.5 pt-0.5">
            <NavArrow d="M.5 9 8 2.500V6h9.500v6H8v3.500z" />
            <NavArrow className="ml-[13px]" d="M17.500 9 10 2.500V6H.5v6H10v3.500z" />
            <NavArrow className="ml-[13px]" d="M9 .5 17 9h-4v8.500H5V9H1z" />
            <div className="-mb-px ml-[7px] flex h-[26px] w-[59px] items-center justify-center border border-b-0 border-[#cfcfcf] bg-white pt-0.5"><T w={36} className="font-['DejaVu_Sans',sans-serif] text-[10.500px] leading-4 text-[#111]">untitled</T></div>
          </div>
          <div className="flex min-h-0 flex-1">
            <Palette />
            <div className="flex w-[860px] flex-col border-2 border-x border-t border-[#7f8692] bg-white">
              <div className="flex h-[30px] shrink-0 items-center border-b-2 border-[#7f8692] pl-[2px] pr-[5px]">
                <span className="flex size-4 items-center justify-center border border-[#777] bg-[#eee] [&>svg]:size-3"><SimulinkLogo /></span>
                <T w={36} className="ml-[3px] font-['DejaVu_Sans',sans-serif] text-[10.500px] leading-4 text-[#111]">untitled</T>
                <Caret className="mb-0.5 ml-auto" />
              </div>
              <div className="min-h-0 flex-1 overflow-hidden"><Diagram /></div>
            </div>
          </div>
        </div>
        <div className="ml-[2px] w-[32px] shrink-0 border-l border-[#b5b5b5] pl-[7px] pt-0.5">
          <div className="flex h-[112px] w-[22px] items-center justify-center border border-[#cfcfcf] bg-white">
            <span className="font-['DejaVu_Sans',sans-serif] text-[11px] leading-none tracking-[-0.650px] text-[#1c1c1c] [writing-mode:vertical-rl]">Property Inspector</span>
          </div>
        </div>
      </div>
      <div className="flex flex-1 items-center pl-1.5 pr-[25px] pt-1">
        <T w={32} className="font-['Open_Sans',sans-serif] text-xs leading-4 text-[#333]">Ready</T>
        <T w={69} className="ml-auto font-['Open_Sans',sans-serif] text-xs leading-4 text-[#2b2f97]">auto(ode23t)</T>
      </div>
      <ScopeWindow />
    </section>
  );
}

/* ---------- task bar ---------- */

function Taskbar() {
  return (
    <div className="flex h-10 shrink-0 items-center bg-[linear-gradient(90deg,#d5d6d6_0%,#d6d7d6_50%,#d3d6d8_54%,#cfdfe9_57.5%,#d0dde5_60%,#d9dfdd_66%,#dae0de_78%,#d7d8d9_83%,#d6d6d6_100%)]">
      <span className="ml-4"><WinLogo size={16} color="#000" /></span>
      <span className="ml-8"><TaskView size={16} color="#111" /></span>
      <span className="ml-[23px] flex h-10 w-10 items-center justify-center border-b-2 border-[#8d63bb] bg-[#e1e2e2]"><ChromeLogo size={23} /></span>
      <span className="ml-[5px] flex h-10 w-[48px] items-center justify-center border-b-2 border-[#8d63bb] border-r-[3px] border-r-[#dcdcdc] bg-[#f2f2f2]"><MatlabLogo size={24} /></span>
      <div className="ml-auto flex h-10 items-center text-black">
        <span className="flex h-5 w-[49px] items-center justify-center border-2 border-white bg-[#169b46]"><T w={36} className="font-['Open_Sans',sans-serif] text-[13px] leading-4 text-white">100%</T></span>
        <svg width="10" height="18" viewBox="0 0 10 18" className="ml-[7px]"><path d="M2.500 1v5M7.500 1v5" stroke="#fff" strokeWidth="1.600" /><path d="M0 6h10v4q-1 3-4 3v4H4v-4q-3 0-4-3z" fill="#fff" /></svg>
        <svg width="12" height="7" viewBox="0 0 12 7" className="ml-[11px]"><path d="M.5 6.500 6 1l5.500 5.500" fill="none" stroke="#111" strokeWidth="1.200" /></svg>
        <MdMic size={20} className="ml-2" />
        <span className="ml-[7px]"><BatteryPlug w={16} color="#111" /></span>
        <svg width="16" height="16" viewBox="0 0 16 16" className="ml-2"><path d="M4 3.500h11.500v8H5M9.500 12v3M5.500 15h8M.5 1.500h4v4h-4zM2.500 5.500v7" fill="none" stroke="#111" /></svg>
        <span className="ml-2"><Speaker size={16} color="#222" /></span>
        <div className="ml-[9px] flex w-6 flex-col items-center font-['Open_Sans',sans-serif] text-[11.500px] leading-[17px]">
          <T w={23}>ENG</T>
          <T w={14}>US</T>
        </div>
        <div className="ml-3 flex w-[58px] flex-col items-center font-['Open_Sans',sans-serif] text-[11.500px] leading-[17px]">
          <T w={26}>15:53</T>
          <T w={57}>19-08-2020</T>
        </div>
        <svg width="16" height="16" viewBox="0 0 16 16" className="ml-[18px]"><path d="M.7 1h14.600v10.500H11v3.500l-4-3.500H.7z" fill="none" stroke="#111" strokeWidth="1.200" /></svg>
        <span className="ml-5 h-10 w-px bg-[#b2b2b2]" />
        <span className="w-[4px]" />
      </div>
    </div>
  );
}

export default function App() {
  return (
    <main className="flex h-[1080px] w-[1920px] flex-col overflow-hidden bg-[#d6d6d6]">
      <div className="flex h-[1040px] shrink-0">
        <MeetWindow />
        <SimulinkWindow />
      </div>
      <Taskbar />
    </main>
  );
}
